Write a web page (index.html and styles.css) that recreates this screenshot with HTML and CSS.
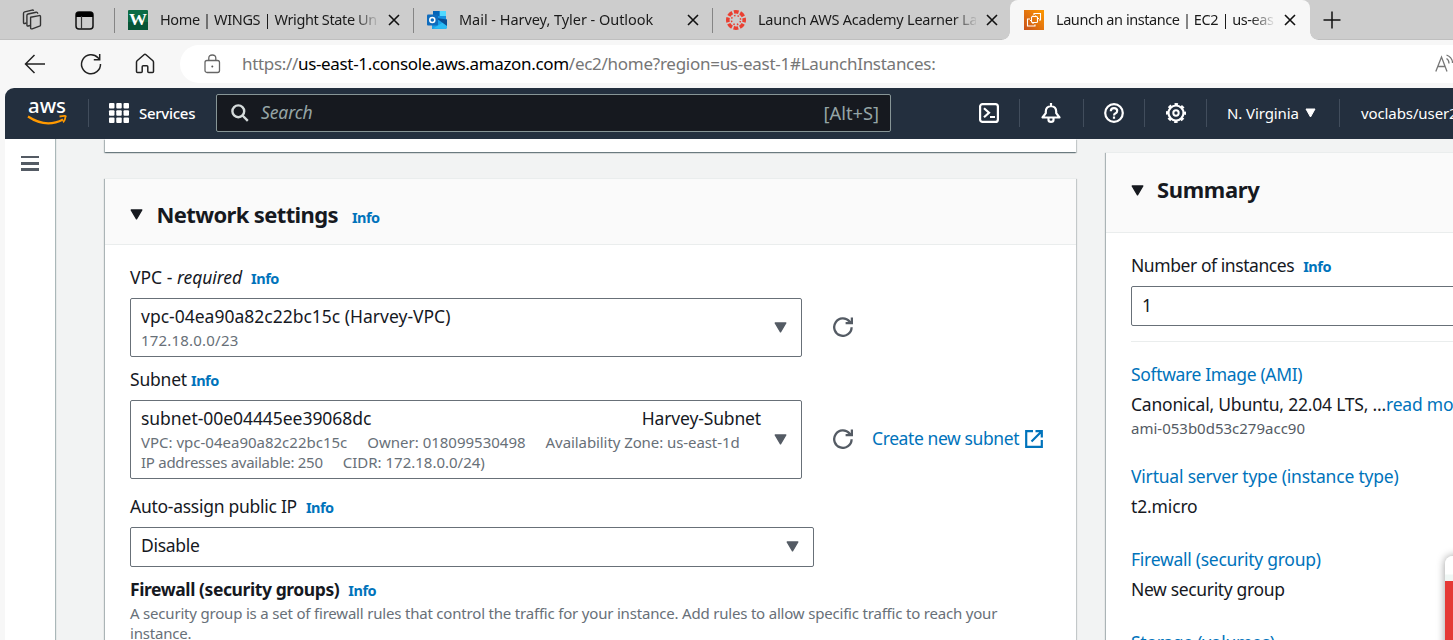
FILE: index.html
```html
<!DOCTYPE html>
<html lang="en">
<head>
<meta charset="utf-8">
<title>Launch an instance | EC2 | us-east-1</title>
<link rel="stylesheet" href="styles.css">
</head>
<body>
<svg class="defs" width="0" height="0">
  <symbol id="close" viewBox="0 0 12 12"><path d="M1 1l10 10M11 1L1 11" fill="none" stroke="#111" stroke-width="1.6"/></symbol>
  <symbol id="caret" viewBox="0 0 13 11"><path d="M1.2 1h10.6L6.5 9.8z" fill="currentColor" stroke="currentColor" stroke-width="1.4" stroke-linejoin="round"/></symbol>
  <symbol id="refresh" viewBox="0 0 20 20"><path d="M18.6 10.2A8.7 8.7 0 1 1 16.6 4.6L18.6 6.3M18.9 .4V6.2H12.6" fill="none" stroke="#545b64" stroke-width="2.3"/></symbol>
</svg>

<header class="tabs">
  <div class="tab-tools">
    <svg width="22" height="22" viewBox="0 0 22 22" fill="none" stroke="#333" stroke-width="1.4" stroke-linejoin="round"><path d="M10.6 8.200l8.600-1.600q1.300-.2 1.300 1.100v8.200q0 1-1 1.300l-7.300 2.600q-1.600.5-1.600-1.100z"/><path d="M10 16.500l-1.800.5q-1.300.3-1.300-1V6.500q0-1.200 1.200-1.500l8-1.800q1.500-.3 1.600 1.500"/><path d="M6.500 14l-1.700.5q-1.300.3-1.300-1V4.500q0-1.300 1.200-1.600L12 1.100q1.300-.2 1.600.8"/></svg>
    <svg width="19" height="19" viewBox="0 0 19 19"><rect x="1" y="1" width="17" height="17" rx="3" fill="none" stroke="#111" stroke-width="1.5"/><path d="M1 6V4q0-3 3-3h11q3 0 3 3v2z"/><path d="M6.500 5v13" stroke="#333" stroke-width="1.200"/></svg>
  </div>
  <div class="tab">
    <svg width="20" height="20" viewBox="0 0 20 20"><rect width="20" height="20" rx="1" fill="#0b6b45"/><rect y="12" width="20" height="8" fill="#075537"/><text x="10" y="15" text-anchor="middle" textLength="18" lengthAdjust="spacingAndGlyphs" class="fav-w">W</text></svg>
    <span class="tab-title ls-home">Home | WINGS | Wright State Un</span>
    <svg class="x" width="12" height="12"><use href="#close"/></svg>
  </div>
  <div class="tab">
    <svg width="20" height="20" viewBox="0 0 20 20"><path d="M6 1h13v10H6z" fill="#1490df"/><path d="M12.500 1H19v5h-6.500z" fill="#50d9ff"/><path d="M6 1h6.500v5H6z" fill="#0364b8"/><path d="M5 10l15-.5V17q0 2-2 2H5z" fill="#1a9fe8"/><path d="M20 10L6 18.500 18 19q2 0 2-2z" fill="#2bbcf5"/><path d="M9 8l11 8v-6.500z" fill="#0a4f94"/><rect y="4.500" width="11" height="11" rx="1" fill="#0f6cbd"/><circle cx="5.300" cy="10" r="2.500" fill="none" stroke="#fff" stroke-width="1.500"/></svg>
    <span class="tab-title ls-mail">Mail - Harvey, Tyler - Outlook</span>
    <svg class="x" width="12" height="12"><use href="#close"/></svg>
  </div>
  <div class="tab">
    <svg width="20" height="20" viewBox="0 0 20 20"><g fill="none" stroke="#ea3f31"><circle cx="10" cy="10" r="8.200" stroke-width="3.600" stroke-dasharray="4.740 1.700" stroke-dashoffset="2.370"/><circle cx="10" cy="10" r="4.600" stroke-width="1.500" stroke-dasharray="1.500 2.113" stroke-dashoffset="-1.060"/></g></svg>
    <span class="tab-title ls-academy">Launch AWS Academy Learner La</span>
    <svg class="x" width="12" height="12"><use href="#close"/></svg>
  </div>
  <div class="tab active">
    <svg width="20" height="20" viewBox="0 0 20 20"><defs><linearGradient id="og" x1="0" y1="1" x2="1" y2="0"><stop offset="0" stop-color="#c8511b"/><stop offset="1" stop-color="#f90"/></linearGradient></defs><rect width="20" height="20" fill="url(#og)"/><g fill="none" stroke="#fff" stroke-width="1.100"><rect x="7.500" y="6.500" width="6" height="6" rx="1"/><path d="M10 5V3.500h6.500V10H15M11 14.500V16H3.500V9H6M9 5.500v1M11.500 5.500v1M9 12.500v1.500M6 10.500h1.500M13.500 8.500H15"/></g></svg>
    <span class="tab-title ls-launch">Launch an instance | EC2 | us-eas</span>
    <svg class="x" width="12" height="12"><use href="#close"/></svg>
  </div>
  <svg class="plus" width="18" height="18" viewBox="0 0 18 18"><path d="M9 .5v17M.5 9h17" stroke="#111" stroke-width="1.500"/></svg>
</header>

<div class="toolbar">
  <div class="tool-icons">
    <svg width="22" height="20" viewBox="0 0 22 20" fill="none" stroke="#222" stroke-width="1.500"><path d="M21 10H1.500M10.500 1L1.500 10l9 9"/></svg>
    <svg width="22" height="22" viewBox="0 0 22 22" fill="none" stroke="#222" stroke-width="1.500"><path d="M20.500 11A9.500 9.500 0 1 1 18 4.800L19.500 6.500M19.700 1v5.700h-5.900"/></svg>
    <svg width="20" height="21" viewBox="0 0 20 21" fill="none" stroke="#222" stroke-width="1.500" stroke-linejoin="round"><path d="M1.500 9.200q0-.8.6-1.400L9 1.700q1-.9 2 0l6.900 6.100q.6.600.6 1.400v9.300q0 1-1 1h-3.700q-1 0-1-1v-4.700q0-1-1-1H8.200q-1 0-1 1v4.700q0 1-1 1H2.500q-1 0-1-1z"/></svg>
  </div>
  <div class="address">
    <svg width="17" height="20" viewBox="0 0 17 20" fill="none" stroke="#666" stroke-width="1.300"><rect x="1" y="6.500" width="14.500" height="12" rx="2"/><path d="M4.800 6.500V4q0-3 3.500-3t3.500 3v2.500"/><circle cx="8.300" cy="12.500" r="1" fill="#555" stroke="none"/></svg>
    <div class="url"><span>https://</span><b>us-east-1.console.aws.amazon.com</b><span class="path">/ec2/home?region=us-east-1#LaunchInstances:</span></div>
    <svg class="read" width="18" height="20" viewBox="0 0 18 20" fill="none" stroke="#777" stroke-width="1.300"><path d="M.8 17.500L6.500 3 12 17.500M3 12.500h7M11.500 4.500q2.500 1.500 2.500 5M11.500 1q6 2.500 6 8"/></svg>
  </div>
</div>

<nav class="aws-nav">
  <svg class="logo" width="42" height="28" viewBox="0 0 42 28"><text x="1" y="13.500" textLength="38" lengthAdjust="spacingAndGlyphs" class="logo-text">aws</text><g fill="none" stroke="#f90" stroke-width="2.200"><path d="M1 17.500Q19 29.500 36 20.500"/><path d="M32.500 17.500q7.500-1.200 6 .3-.2 3.400-2.400 5.500" stroke-width="1.800"/></g></svg>
  <i class="sep s1"></i>
  <svg class="grid" width="20" height="20" viewBox="0 0 20 20" fill="#fff"><rect width="5.500" height="5.500" rx="1"/><rect x="7.250" width="5.500" height="5.500" rx="1"/><rect x="14.500" width="5.500" height="5.500" rx="1"/><rect y="7.250" width="5.500" height="5.500" rx="1"/><rect x="7.250" y="7.250" width="5.500" height="5.500" rx="1"/><rect x="14.500" y="7.250" width="5.500" height="5.500" rx="1"/><rect y="14.500" width="5.500" height="5.500" rx="1"/><rect x="7.250" y="14.500" width="5.500" height="5.500" rx="1"/><rect x="14.500" y="14.500" width="5.500" height="5.500" rx="1"/></svg>
  <span class="services">Services</span>
  <div class="search">
    <svg width="18" height="18" viewBox="0 0 18 18" fill="none" stroke="#d5dbdb" stroke-width="2.400"><circle cx="7.300" cy="7.300" r="5.900"/><path d="M11.500 11.500l5.300 5.300"/></svg>
    <em>Search</em><span class="key">[Alt+S]</span>
  </div>
  <div class="nav-icons">
    <div class="cell"><svg width="20" height="20" viewBox="0 0 20 20" fill="none" stroke="#fff" stroke-width="2.200"><rect x="1.100" y="1.100" width="17.800" height="17.800" rx="2.500"/><path d="M5 5.200l5 4.500-5 4.600M11 14h5"/></svg></div>
    <div class="cell c2"><svg width="20" height="20" viewBox="0 0 20 20" fill="none" stroke="#fff" stroke-width="2.200" stroke-linejoin="round"><path d="M10 0v3M1.500 14.500h17l-3.300-4.300V8.500q0-5-5.200-5.500-5.200.5-5.200 5.500v1.700z"/><path d="M7.500 15v2q0 1.800 2.500 1.800t2.500-1.800v-2"/></svg></div>
    <div class="cell c3"><svg width="20" height="20" viewBox="0 0 20 20" fill="none" stroke="#fff" stroke-width="2.200"><circle cx="10" cy="10" r="8.800"/><path d="M6.800 8.300q0-3.200 3.200-3.200t3.200 2.700q0 1.700-1.600 2.500-1.600.7-1.600 2.200M10 13.600v2.200"/></svg></div>
    <div class="cell c4"><svg width="20" height="20" viewBox="0 0 20 20" fill="none" stroke="#fff"><circle cx="10" cy="10" r="7.500" stroke-width="2.200"/><circle cx="10" cy="10" r="9" stroke-width="2" stroke-dasharray="3.530 3.540" stroke-dashoffset="1.765"/><circle cx="10" cy="10" r="2.700" stroke-width="2"/></svg></div>
    <div class="cell c5"><span>N. Virginia</span><svg width="11" height="10" viewBox="0 0 11 10"><path d="M1 1h9L5.500 9z" fill="#fff" stroke="#fff" stroke-linejoin="round"/></svg></div>
    <div class="cell c6"><span>voclabs/user2</span></div>
  </div>
</nav>

<div class="page">
  <aside class="rail"><i></i><i></i><i></i></aside>
  <main class="main">
    <section class="card previous"></section>
    <section class="card network">
      <div class="card-head">
        <svg class="caret" width="13" height="11"><use href="#caret"/></svg>
        <h2 class="ls-network">Network settings</h2><a class="info">Info</a>
      </div>
      <div class="fields">
        <div class="label"><span>VPC - <em>required</em></span><a class="info">Info</a></div>
        <div class="row">
          <div class="select">
            <div class="value"><div class="line">vpc-04ea90a82c22bc15c (Harvey-VPC)</div><div class="small"><span class="ls-ip">172.18.0.0/23</span></div></div>
            <svg class="caret" width="13" height="11"><use href="#caret"/></svg>
          </div>
          <svg class="refresh" width="20" height="20"><use href="#refresh"/></svg>
        </div>
        <div class="label subnet"><span class="ls-20">Subnet</span><a class="info">Info</a></div>
        <div class="row">
          <div class="select">
            <div class="value"><div class="line"><span class="ls-05">subnet-00e04445ee39068dc</span><span class="ls-15">Harvey-Subnet</span></div>
              <div class="small"><span>VPC: vpc-04ea90a82c22bc15c</span><span>Owner: 018099530498</span><span class="ls-10">Availability Zone: us-east-1d</span></div>
              <div class="small"><span class="ls-27">IP addresses available: 250</span><span>CIDR: 172.18.0.0/24)</span></div></div>
            <svg class="caret" width="13" height="11"><use href="#caret"/></svg>
          </div>
          <svg class="refresh" width="20" height="20"><use href="#refresh"/></svg>
          <a class="create">Create new subnet</a>
          <svg class="external" width="18" height="18" viewBox="0 0 18 18" fill="none" stroke="#0073bb" stroke-width="2.200"><path d="M8 1.200H1.200v15.600h15.600V10M10.500 1.200h6.300v6.300M16.500 1.500L6.500 11.500"/></svg>
        </div>
        <div class="label auto"><span class="ls-27">Auto-assign public IP</span><a class="info">Info</a></div>
        <div class="select wide"><div class="value ls-30">Disable</div><svg class="caret" width="13" height="11"><use href="#caret"/></svg></div>
        <div class="label firewall"><strong>Firewall (security groups)</strong><a class="info">Info</a></div>
        <p class="desc">A security group is a set of firewall rules that control the traffic for your instance. Add rules to allow specific traffic to reach your<br>instance.</p>
      </div>
    </section>
  </main>
  <aside class="card summary">
    <div class="card-head"><svg class="caret" width="13" height="11"><use href="#caret"/></svg><h2 class="ls-35">Summary</h2></div>
    <div class="summary-body">
      <div class="label"><span class="ls-number">Number of instances</span><a class="info">Info</a></div>
      <div class="input">1</div>
      <hr>
      <div class="item ami"><a class="ls-35">Software Image (AMI)</a><div class="ls-canonical">Canonical, Ubuntu, 22.04 LTS, ...<a>read more</a></div><small>ami-053b0d53c279acc90</small></div>
      <div class="item"><a class="ls-20">Virtual server type (instance type)</a><div class="ls-15">t2.micro</div></div>
      <div class="item"><a class="ls-27">Firewall (security group)</a><div class="ls-35">New security group</div></div>
      <div class="item"><a class="ls-27">Storage (volumes)</a></div>
    </div>
  </aside>
</div>
<div class="popup"></div>
</body>
</html>
```
FILE: styles.css
```css
* { box-sizing: border-box; }
html, body { margin: 0; height: 640px; overflow: hidden; }
body { position: relative; width: 1453px; background: #f7f7f7; color: #16191f; font: 17.5px/25px "Noto Sans", sans-serif; }
svg { display: block; flex: none; overflow: visible; }
.defs { position: absolute; }
a { color: #0073bb; }
h2 { margin: 0; font-size: 22px; line-height: 28px; font-weight: 700; }

.ls-home { letter-spacing: -.38px; }
.ls-mail { letter-spacing: -.04px; }
.ls-academy { letter-spacing: -.23px; }
.ls-launch { letter-spacing: -.43px; }
.ls-network { letter-spacing: -.63px; }
.ls-ip { letter-spacing: .2px; }
.ls-05 { letter-spacing: -.05px; }
.ls-10 { letter-spacing: -.08px; }
.ls-15 { letter-spacing: -.15px; }
.ls-20 { letter-spacing: -.2px; }
.ls-canonical { letter-spacing: -.21px; }
.ls-27 { letter-spacing: -.27px; }
.ls-30 { letter-spacing: -.3px; }
.ls-35 { letter-spacing: -.35px; }
.ls-number { letter-spacing: -.43px; }

/* Browser tabs */
.tabs { display: flex; align-items: center; height: 40px; background: #cdcdcd; box-shadow: inset 0 -1px #bfbfbf; }
.tab-tools { display: flex; align-items: center; gap: 33px; width: 114px; padding-left: 20px; }
.tab { position: relative; display: flex; align-items: center; width: 299px; height: 40px; padding-left: 14px; }
.tab::before { content: ""; position: absolute; left: 0; top: 8px; width: 1px; height: 25px; background: #858585; }
.tab-title { width: 218px; margin: 0 10px 1px 12px; overflow: hidden; white-space: nowrap; color: #1b1b1b; font-size: 14.5px; -webkit-mask-image: linear-gradient(90deg, #000 195px, transparent 220px); mask-image: linear-gradient(90deg, #000 195px, transparent 220px); }
.tab.active { width: 300px; margin-left: -1px; background: #f7f7f7; border-radius: 8px 8px 0 0; }
.tab.active::before { left: -8px; top: 32px; width: 8px; height: 8px; background: radial-gradient(circle at 0 0, #cdcdcd 7.5px, #f7f7f7 8px); }
.tab.active::after { content: ""; position: absolute; right: -8px; top: 32px; width: 8px; height: 8px; background: radial-gradient(circle at 100% 0, #cdcdcd 7.5px, #f7f7f7 8px); }
.plus { margin: 0 0 1px 13px; }
.fav-w { font: 700 17px "Liberation Serif", serif; fill: #fff; }

/* Browser toolbar */
.toolbar { display: flex; align-items: center; height: 48px; padding-bottom: 1px; }
.tool-icons { display: flex; align-items: center; gap: 33.5px; width: 180px; padding-left: 24px; }
.address { display: flex; align-items: center; flex: 1; height: 38px; padding-left: 24px; background: #fff; border-radius: 19px 0 0 19px; overflow: hidden; }
.url { width: 1193px; margin-left: 21px; color: #767676; font-size: 17px; letter-spacing: -.33px; white-space: nowrap; }
.url b { color: #000; font-weight: 400; }
.url .path { letter-spacing: -.27px; }

/* Console navigation */
.aws-nav { display: flex; align-items: center; height: 51px; margin-left: 5px; padding-bottom: 1px; background: #232f3e; border-radius: 9px 0 0 0; color: #fff; font-size: 15px; overflow: hidden; }
.aws-nav > * { flex: none; }
.logo { margin-left: 22px; }
.logo-text { font: 500 20px "Noto Sans", sans-serif; fill: #fff; }
.sep { width: 1px; height: 28px; background: #414d5c; }
.s1 { margin-left: 19px; }
.grid { margin: 0 10px 0 20px; }
.services { width: 77px; letter-spacing: -.28px; font-weight: 500; }
.search { display: flex; align-items: center; width: 675px; height: 38px; padding: 0 11px 0 14px; background: #16191f; border: 1px solid #879596; border-radius: 2px; color: #95a5a6; font-size: 17.5px; }
.search em { margin-left: 12px; padding-bottom: 1px; letter-spacing: -.1px; }
.search .key { margin-left: auto; padding-bottom: 2px; font-size: 18.3px; }
.nav-icons { display: flex; align-items: center; margin-left: 88px; white-space: nowrap; }
.cell { display: flex; align-items: center; height: 28px; width: 41px; border-right: 1px solid #414d5c; }
.c2 { width: 64px; padding-left: 21px; }
.c3 { width: 61px; padding-left: 20px; }
.c4 { width: 62px; padding-left: 21px; }
.c5 { width: 133px; padding-left: 20px; gap: 6px; }
.c5 span { letter-spacing: -.1px; }
.c6 { width: 120px; padding-left: 21px; border: 0; letter-spacing: -.1px; }

/* Page */
.page { display: flex; height: 501px; margin-left: 5px; background: #f2f3f3; overflow: hidden; }
.rail { display: flex; flex: none; flex-direction: column; align-items: center; gap: 3.8px; width: 50px; padding-top: 17px; background: #fff; box-shadow: 1px 0 1px #aab7b8; }
.rail i { width: 18px; height: 2.4px; background: #545b64; }
.main { flex: none; width: 971px; margin-left: 50px; }
.card { background: #fff; box-shadow: 0 1px 1px rgba(0,28,36,.3), 1px 1px 1px rgba(0,28,36,.15), -1px 1px 1px rgba(0,28,36,.25); }
.previous { height: 13px; }
.network { height: 462px; margin-top: 26px; border-top: 1px solid #eaeded; overflow: hidden; }
.card-head { display: flex; align-items: center; background: #fafafa; border-bottom: 1px solid #eaeded; }
.network .card-head { height: 66px; padding: 5px 0 0 24.5px; }
.card-head h2 { margin-left: 14px; margin-bottom: 1px; }
.info { position: relative; top: 1px; margin-left: 9px; font-size: 14.5px; font-weight: 700; letter-spacing: -.5px; }
.card-head .info { top: 3px; margin-left: 14px; }
.network .card-head .caret { margin-bottom: -1px; }
.fields { padding: 20px 0 0 25px; }
.label { display: flex; align-items: center; height: 25px; margin-bottom: 8px; }
.label em { letter-spacing: -.05px; }
.subnet { margin-top: 10px; }
.subnet .info { margin-left: 4px; }
.auto { margin-top: 15px; }
.row { display: flex; align-items: center; }
.select { display: flex; align-items: center; width: 672px; padding: 5px 14px 7px 10px; border: 1px solid #687078; border-radius: 2px; }
.select .caret { position: relative; top: 1px; color: #545b64; }
.value { flex: 1; margin-right: 13px; }
.line { display: flex; justify-content: space-between; }
.small { position: relative; top: 1px; display: flex; gap: 20px; height: 20px; color: #687078; font-size: 15px; line-height: 20px; white-space: nowrap; }
.refresh { margin: 0 0 2px 31px; }
.create { margin: 0 6px 2px 19px; letter-spacing: -.4px; }
.external { margin-bottom: 2px; }
.wide { width: 684px; height: 40px; padding-bottom: 8px; }
.firewall { margin: 10px 0 1px; }
.firewall strong { letter-spacing: -.42px; }
.desc { margin: 0; color: #687078; font-size: 15px; line-height: 20px; letter-spacing: -.193px; white-space: nowrap; }

/* Summary */
.summary { flex: none; width: 380px; height: 488px; margin: 13px 0 0 30px; border-top: 1px solid #eaeded; overflow: hidden; }
.summary .card-head { height: 80px; padding: 0 0 6px 24.5px; }
.summary .card-head .caret { margin-top: 2px; }
.summary .card-head h2 { margin-left: 13.5px; }
.summary-body { padding: 20px 0 0 25px; white-space: nowrap; }
.input { height: 40px; padding: 6px 10px; border: 1px solid #687078; border-radius: 2px; }
hr { margin: 15px 0 20px; border: 0; border-top: 1px solid #eaeded; }
.item { display: flex; flex-direction: column; gap: 5px; margin-bottom: 28px; }
.item small { margin-top: -4px; color: #545b64; font-size: 15px; line-height: 20px; }
.ami { margin-bottom: 26px; }

.popup { position: absolute; left: 1445px; top: 556px; width: 60px; height: 120px; border-radius: 8px; background: linear-gradient(#fff 18px, #f0f7f5 19px, #f0f7f5 25px, #e53935 25px); box-shadow: 0 0 9px rgba(0,0,0,.4); }
```
